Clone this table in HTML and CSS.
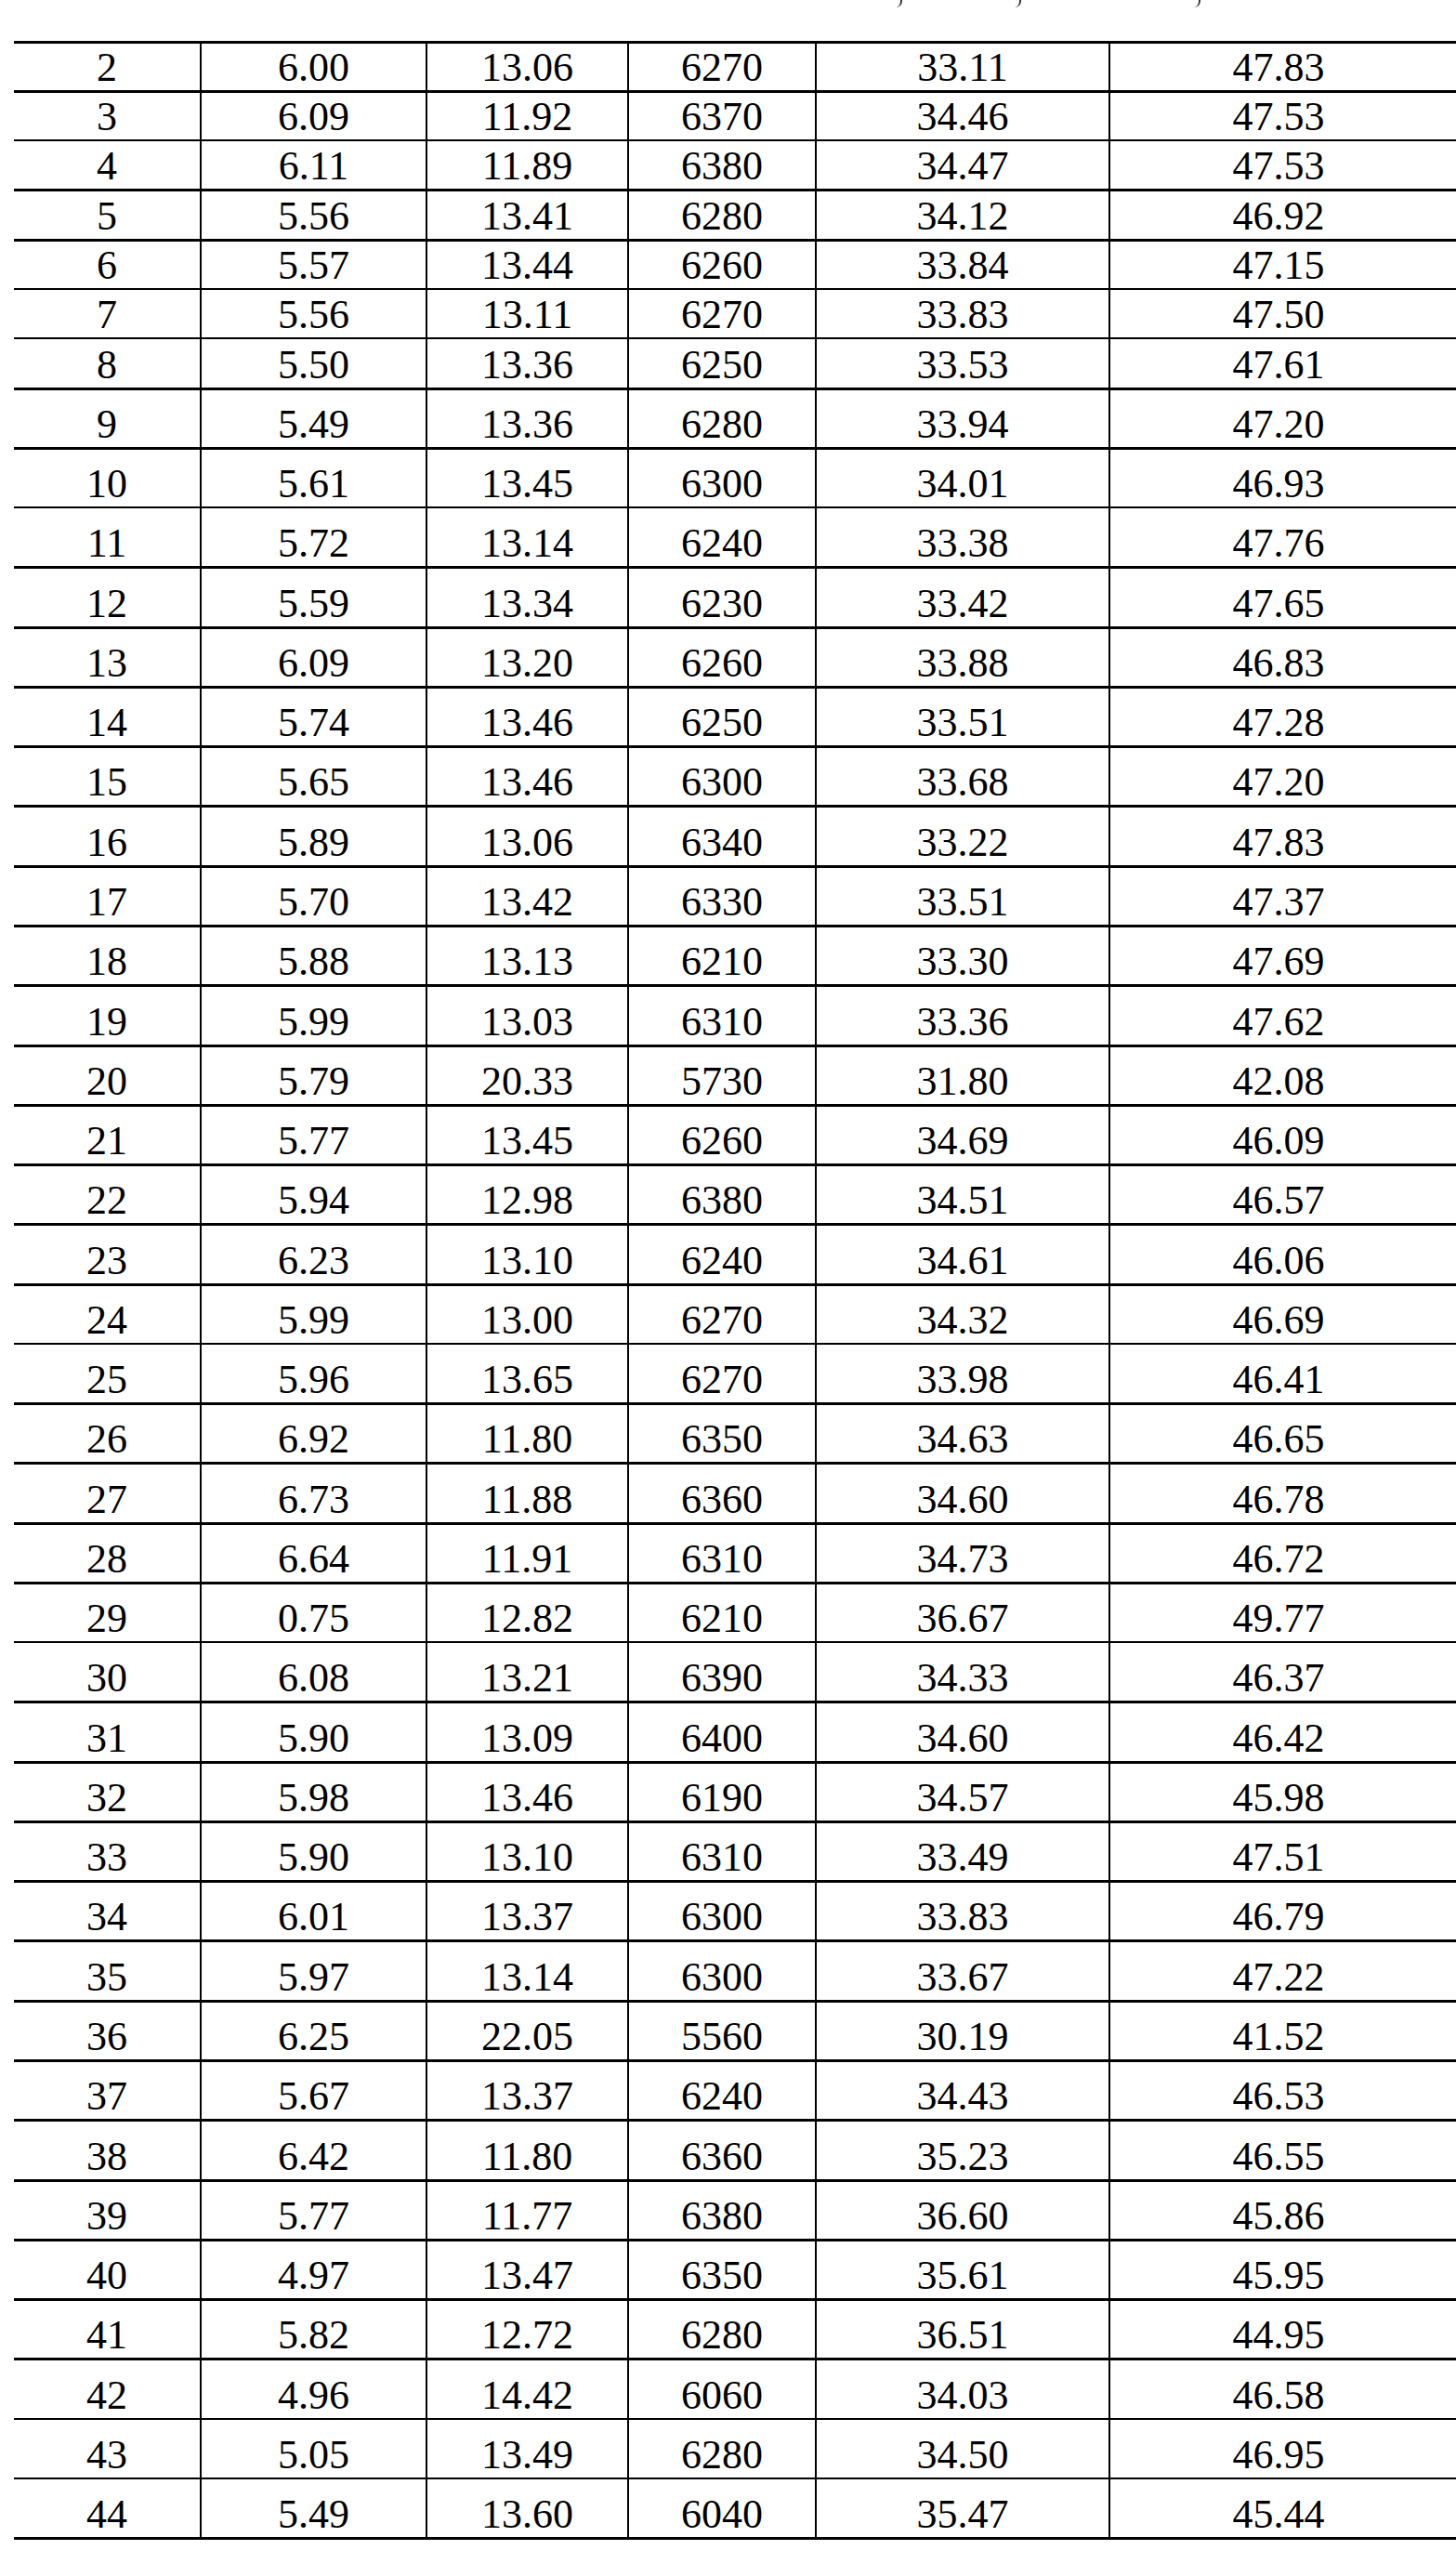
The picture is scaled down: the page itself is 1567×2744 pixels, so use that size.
FILE: index.html
```html
<!DOCTYPE html>
<html lang="en">
<head>
<meta charset="utf-8">
<title>Data table</title>
<link rel="stylesheet" href="styles.css">
</head>
<body>
<div class="page">
  <div class="head-clip">
    <span class="tick t1"></span><span class="tick t2"></span><span class="tick t3"></span>
  </div>
  <table class="data">
    <colgroup>
      <col class="c1"><col class="c2"><col class="c3"><col class="c4"><col class="c5"><col class="c6">
    </colgroup>
    <tbody>
      <tr class="s"><td>2</td><td>6.00</td><td>13.06</td><td>6270</td><td>33.11</td><td>47.83</td></tr>
      <tr class="s"><td>3</td><td>6.09</td><td>11.92</td><td>6370</td><td>34.46</td><td>47.53</td></tr>
      <tr class="s thin"><td>4</td><td>6.11</td><td>11.89</td><td>6380</td><td>34.47</td><td>47.53</td></tr>
      <tr class="s"><td>5</td><td>5.56</td><td>13.41</td><td>6280</td><td>34.12</td><td>46.92</td></tr>
      <tr class="s"><td>6</td><td>5.57</td><td>13.44</td><td>6260</td><td>33.84</td><td>47.15</td></tr>
      <tr class="s thin"><td>7</td><td>5.56</td><td>13.11</td><td>6270</td><td>33.83</td><td>47.50</td></tr>
      <tr class="s thin"><td>8</td><td>5.50</td><td>13.36</td><td>6250</td><td>33.53</td><td>47.61</td></tr>
      <tr class="t"><td>9</td><td>5.49</td><td>13.36</td><td>6280</td><td>33.94</td><td>47.20</td></tr>
      <tr class="t"><td>10</td><td>5.61</td><td>13.45</td><td>6300</td><td>34.01</td><td>46.93</td></tr>
      <tr class="t thin"><td>11</td><td>5.72</td><td>13.14</td><td>6240</td><td>33.38</td><td>47.76</td></tr>
      <tr class="t"><td>12</td><td>5.59</td><td>13.34</td><td>6230</td><td>33.42</td><td>47.65</td></tr>
      <tr class="t"><td>13</td><td>6.09</td><td>13.20</td><td>6260</td><td>33.88</td><td>46.83</td></tr>
      <tr class="t"><td>14</td><td>5.74</td><td>13.46</td><td>6250</td><td>33.51</td><td>47.28</td></tr>
      <tr class="t"><td>15</td><td>5.65</td><td>13.46</td><td>6300</td><td>33.68</td><td>47.20</td></tr>
      <tr class="t"><td>16</td><td>5.89</td><td>13.06</td><td>6340</td><td>33.22</td><td>47.83</td></tr>
      <tr class="t"><td>17</td><td>5.70</td><td>13.42</td><td>6330</td><td>33.51</td><td>47.37</td></tr>
      <tr class="t"><td>18</td><td>5.88</td><td>13.13</td><td>6210</td><td>33.30</td><td>47.69</td></tr>
      <tr class="t"><td>19</td><td>5.99</td><td>13.03</td><td>6310</td><td>33.36</td><td>47.62</td></tr>
      <tr class="t"><td>20</td><td>5.79</td><td>20.33</td><td>5730</td><td>31.80</td><td>42.08</td></tr>
      <tr class="t"><td>21</td><td>5.77</td><td>13.45</td><td>6260</td><td>34.69</td><td>46.09</td></tr>
      <tr class="t"><td>22</td><td>5.94</td><td>12.98</td><td>6380</td><td>34.51</td><td>46.57</td></tr>
      <tr class="t"><td>23</td><td>6.23</td><td>13.10</td><td>6240</td><td>34.61</td><td>46.06</td></tr>
      <tr class="t"><td>24</td><td>5.99</td><td>13.00</td><td>6270</td><td>34.32</td><td>46.69</td></tr>
      <tr class="t thin"><td>25</td><td>5.96</td><td>13.65</td><td>6270</td><td>33.98</td><td>46.41</td></tr>
      <tr class="t"><td>26</td><td>6.92</td><td>11.80</td><td>6350</td><td>34.63</td><td>46.65</td></tr>
      <tr class="t"><td>27</td><td>6.73</td><td>11.88</td><td>6360</td><td>34.60</td><td>46.78</td></tr>
      <tr class="t"><td>28</td><td>6.64</td><td>11.91</td><td>6310</td><td>34.73</td><td>46.72</td></tr>
      <tr class="t"><td>29</td><td>0.75</td><td>12.82</td><td>6210</td><td>36.67</td><td>49.77</td></tr>
      <tr class="t thin"><td>30</td><td>6.08</td><td>13.21</td><td>6390</td><td>34.33</td><td>46.37</td></tr>
      <tr class="t"><td>31</td><td>5.90</td><td>13.09</td><td>6400</td><td>34.60</td><td>46.42</td></tr>
      <tr class="t"><td>32</td><td>5.98</td><td>13.46</td><td>6190</td><td>34.57</td><td>45.98</td></tr>
      <tr class="t"><td>33</td><td>5.90</td><td>13.10</td><td>6310</td><td>33.49</td><td>47.51</td></tr>
      <tr class="t"><td>34</td><td>6.01</td><td>13.37</td><td>6300</td><td>33.83</td><td>46.79</td></tr>
      <tr class="t"><td>35</td><td>5.97</td><td>13.14</td><td>6300</td><td>33.67</td><td>47.22</td></tr>
      <tr class="t"><td>36</td><td>6.25</td><td>22.05</td><td>5560</td><td>30.19</td><td>41.52</td></tr>
      <tr class="t"><td>37</td><td>5.67</td><td>13.37</td><td>6240</td><td>34.43</td><td>46.53</td></tr>
      <tr class="t"><td>38</td><td>6.42</td><td>11.80</td><td>6360</td><td>35.23</td><td>46.55</td></tr>
      <tr class="t"><td>39</td><td>5.77</td><td>11.77</td><td>6380</td><td>36.60</td><td>45.86</td></tr>
      <tr class="t"><td>40</td><td>4.97</td><td>13.47</td><td>6350</td><td>35.61</td><td>45.95</td></tr>
      <tr class="t"><td>41</td><td>5.82</td><td>12.72</td><td>6280</td><td>36.51</td><td>44.95</td></tr>
      <tr class="t"><td>42</td><td>4.96</td><td>14.42</td><td>6060</td><td>34.03</td><td>46.58</td></tr>
      <tr class="t thin"><td>43</td><td>5.05</td><td>13.49</td><td>6280</td><td>34.50</td><td>46.95</td></tr>
      <tr class="t thin"><td>44</td><td>5.49</td><td>13.60</td><td>6040</td><td>35.47</td><td>45.44</td></tr>
    </tbody>
  </table>
</div>
</body>
</html>
```

FILE: styles.css
```css
html, body {
  margin: 0;
  padding: 0;
  background: #ffffff;
}

.page {
  padding-left: 15px;
  font-family: "Liberation Serif", "Times New Roman", serif;
  color: #000000;
}

.head-clip {
  height: 10px;
  display: flex;
  align-items: flex-start;
}

.tick {
  display: block;
  width: 5px;
  height: 8px;
  border-right: 2px solid #333333;
  border-bottom-right-radius: 7px;
}

.t1 { margin-left: 949px; }
.t2 { margin-left: 121px; }
.t3 { margin-left: 186px; }

.data {
  border-collapse: separate;
  border-spacing: 0;
  table-layout: fixed;
  width: 1552px;
  margin-top: 33.5px;
  border-bottom: 3px solid #000000;
  font-size: 44px;
}

.c1 { width: 200px; }
.c2 { width: 243px; }
.c3 { width: 217px; }
.c4 { width: 202px; }
.c5 { width: 316px; }
.c6 { width: 374px; }

.data td {
  border-top: 3px solid #000000;
  border-left: 2px solid #000000;
  padding: 0 0 2px 0;
  line-height: 44px;
  text-align: center;
  vertical-align: bottom;
  white-space: nowrap;
}

.data td:first-child {
  border-left: none;
}

.data td:last-child {
  padding-right: 10px;
}

.data tr.thin td {
  border-top-width: 2px;
}

.data tr.s {
  height: 53.3px;
}

.data tr.t {
  height: 64.28px;
}
```
